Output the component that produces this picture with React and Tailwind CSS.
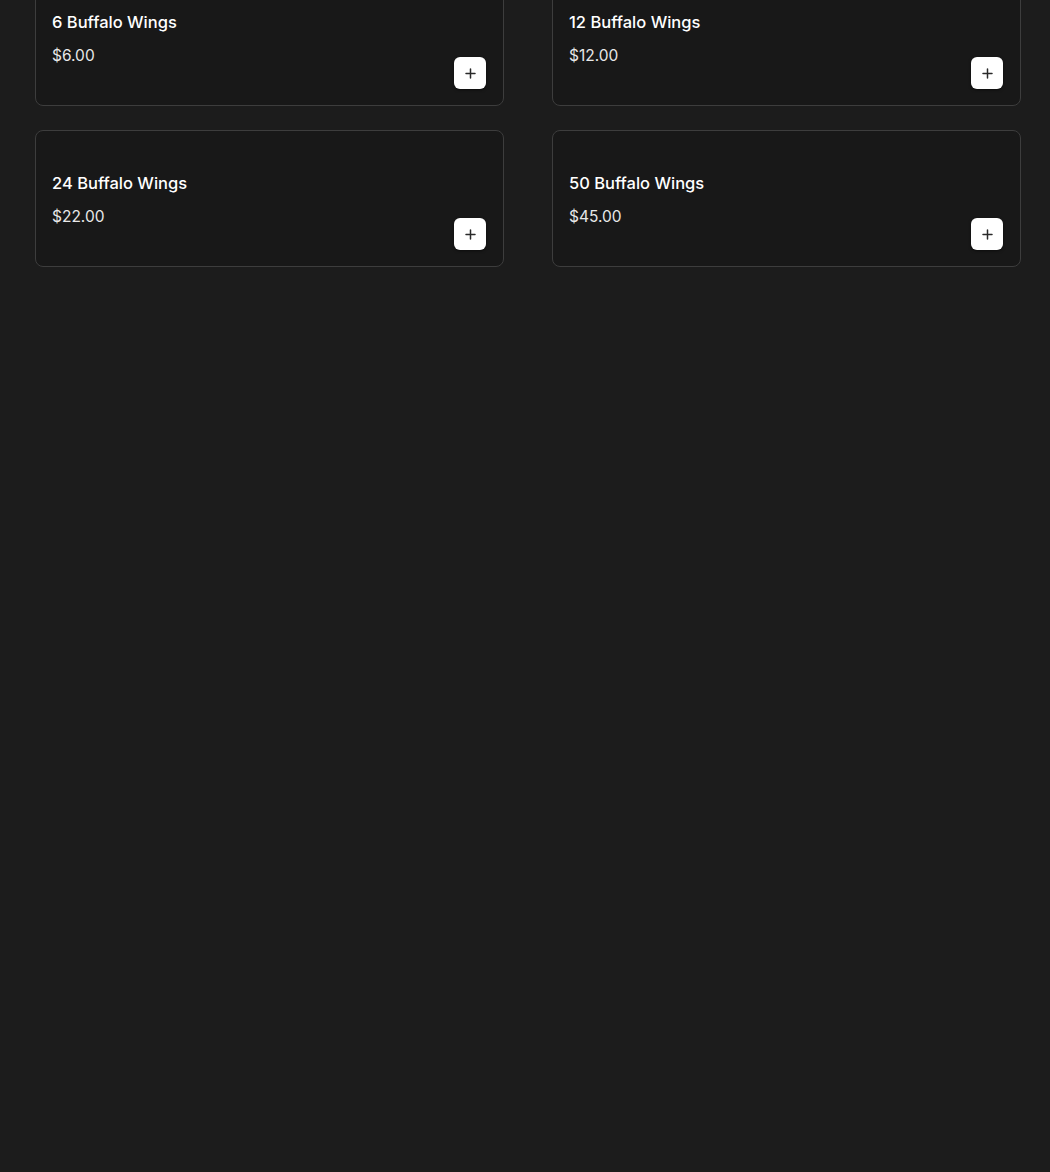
import React from 'react'

const items = [
  { name: '6 Buffalo Wings', price: 6 },
  { name: '12 Buffalo Wings', price: 12 },
  { name: '24 Buffalo Wings', price: 22 },
  { name: '50 Buffalo Wings', price: 45 },
]

const PlusIcon = () => (
  <svg width="11" height="11" viewBox="0 0 11 11" fill="none">
    <path d="M5.5 1v9M1 5.5h9" stroke="#2a2a2a" strokeWidth="1.5" strokeLinecap="round" />
  </svg>
)

const ItemCard = ({ item }) => (
  <div className="h-[137px] rounded-lg border border-[#3d3d3d] bg-[#181818] p-4 flex justify-between">
    <div className="flex flex-col pt-[24px]">
      <h3 className="text-[16.5px] leading-6 font-medium text-white">{item.name}</h3>
      <p className="mt-[10px] text-[15.5px] leading-6 text-[#e8e8e8]">${item.price.toFixed(2)}</p>
    </div>
    <button className="self-end mr-px w-8 h-8 rounded-md bg-white flex items-center justify-center shadow-[0_1px_3px_rgba(0,0,0,0.5)]">
      <PlusIcon />
    </button>
  </div>
)

export default function App() {
  return (
    <div
      className="min-h-[1172px] bg-[#1c1c1c] overflow-hidden"
      style={{ fontFamily: 'Inter, "Noto Sans", sans-serif' }}
    >
      <div className="-mt-[31px] pl-[35px] pr-[29px] grid grid-cols-2 gap-x-[48px] gap-y-[24px]">
        {items.map((item) => (
          <ItemCard key={item.name} item={item} />
        ))}
      </div>
    </div>
  )
}
